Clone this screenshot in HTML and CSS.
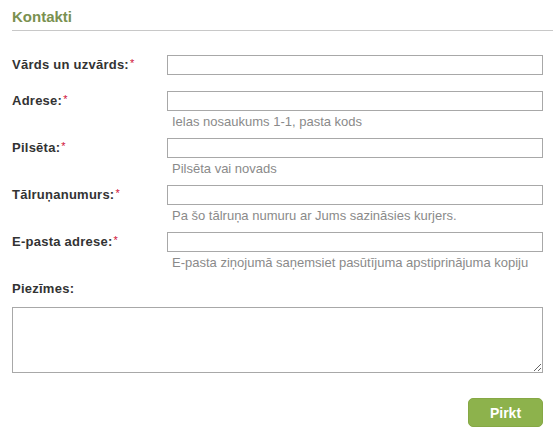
FILE: index.html
```html
<!DOCTYPE html>
<html lang="lv">
<head>
<meta charset="utf-8">
<title>Kontakti</title>
<link rel="stylesheet" href="styles.css">
</head>
<body>
<div class="page">
  <h2 class="title">Kontakti</h2>
  <form class="form">
    <div class="field field-plain">
      <label class="label">Vārds un uzvārds:<span class="req">*</span></label>
      <input class="input" type="text">
    </div>
    <div class="field">
      <label class="label">Adrese:<span class="req">*</span></label>
      <input class="input" type="text">
      <div class="hint">Ielas nosaukums 1-1, pasta kods</div>
    </div>
    <div class="field">
      <label class="label">Pilsēta:<span class="req">*</span></label>
      <input class="input" type="text">
      <div class="hint">Pilsēta vai novads</div>
    </div>
    <div class="field">
      <label class="label">Tālruņanumurs:<span class="req">*</span></label>
      <input class="input" type="text">
      <div class="hint">Pa šo tālruņa numuru ar Jums sazināsies kurjers.</div>
    </div>
    <div class="field">
      <label class="label">E-pasta adrese:<span class="req">*</span></label>
      <input class="input" type="text">
      <div class="hint">E-pasta ziņojumā saņemsiet pasūtījuma apstiprinājuma kopiju</div>
    </div>
    <div class="notes-label">Piezīmes:</div>
    <textarea class="notes"></textarea>
    <div class="actions">
      <button class="buy" type="button">Pirkt</button>
    </div>
  </form>
</div>
</body>
</html>
```

FILE: styles.css
```css
html, body {
  margin: 0;
  padding: 0;
  background: #ffffff;
}
body {
  font-family: "Liberation Sans", Arial, sans-serif;
  color: #333333;
}
.page {
  padding: 8px 1px 0 12px;
}
.title {
  margin: 0;
  font-size: 15px;
  line-height: 18px;
  font-weight: bold;
  color: #7a9150;
  padding-bottom: 4px;
  border-bottom: 1px solid #c8c8c8;
}
.form {
  width: 531px;
  margin-top: 24px;
}
.field {
  display: grid;
  grid-template-columns: 155px 376px;
  margin-bottom: 7px;
}
.field-plain {
  margin-bottom: 16px;
}
.label {
  font-size: 13px;
  font-weight: bold;
  line-height: 20px;
  letter-spacing: 0.25px;
  color: #333333;
}
.req {
  color: #d0103a;
  font-weight: normal;
  font-size: 11px;
  vertical-align: top;
  line-height: 16px;
  margin-left: 1px;
}
.input {
  box-sizing: border-box;
  width: 376px;
  height: 20px;
  margin: 0;
  border: 1px solid #a8a8a8;
  background: #ffffff;
  padding: 0 3px;
  font-family: inherit;
  font-size: 12px;
  outline: none;
}
.hint {
  grid-column: 2;
  padding: 2px 0 0 5px;
  font-size: 13px;
  line-height: 18px;
  color: #8a8a8a;
}
.notes-label {
  font-size: 13px;
  font-weight: bold;
  line-height: 20px;
  letter-spacing: 0.25px;
  margin-bottom: 8px;
}
.notes {
  display: block;
  box-sizing: border-box;
  width: 531px;
  height: 66px;
  margin: 0;
  border: 1px solid #a8a8a8;
  font-family: inherit;
  font-size: 12px;
  outline: none;
}
.actions {
  display: flex;
  justify-content: flex-end;
  margin-top: 25px;
}
.buy {
  width: 75px;
  height: 29px;
  margin-right: 0;
  border: 1px solid #86a845;
  border-radius: 5px;
  background: #8db24c;
  color: #ffffff;
  font-family: inherit;
  font-size: 14px;
  font-weight: bold;
  padding: 0;
  cursor: pointer;
}
```
